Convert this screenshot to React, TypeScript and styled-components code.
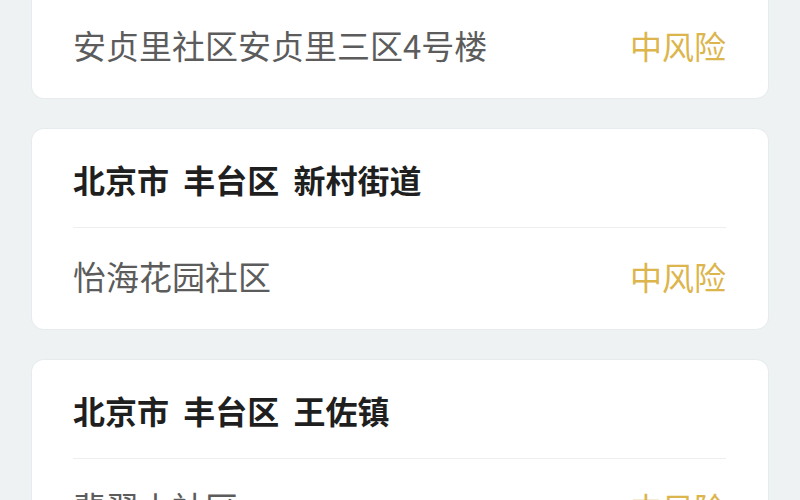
import React from "react";
import styled, { createGlobalStyle } from "styled-components";

const GlobalStyle = createGlobalStyle`
  html, body {
    margin: 0;
    padding: 0;
    background: #eef2f3;
    overflow: hidden;
  }
  body {
    font-family: "Noto Sans CJK SC", "Noto Sans", sans-serif;
  }
`;

const Page = styled.div`
  width: 800px;
  height: 500px;
  overflow: hidden;
  background: #eef2f3;
`;

// 목록이 스크롤된 상태처럼 첫 카드 윗부분이 잘려 보임
const List = styled.div`
  display: flex;
  flex-direction: column;
  gap: 31px;
  padding: 0 32px;
  margin-top: -102px;
`;

const Card = styled.div`
  background: #ffffff;
  border-radius: 12px;
  padding: 0 42px 0 41px;
  box-shadow: 0 0 0 1px rgba(225, 231, 233, 0.6);
`;

const Header = styled.div`
  height: 99px;
  box-sizing: border-box;
  padding-top: 1px;
  display: flex;
  align-items: center;
  border-bottom: 1px solid #eeeeee;
  font-size: 32px;
  font-weight: 700;
  color: #1f1f1f;
  word-spacing: 7px;
`;

const Row = styled.div`
  height: 101px;
  box-sizing: border-box;
  padding-bottom: 5px;
  display: flex;
  align-items: center;
  justify-content: space-between;
  font-size: 33px;
  color: #5c5c5c;
`;

const Risk = styled.span<{ $level: "mid" | "high" }>`
  font-size: 32px;
  color: ${(p) => (p.$level === "high" ? "#e05a4a" : "#dcb54c")};
`;

type Area = {
  region: string;
  place: string;
};

const areas: Area[] = [
  { region: "北京市 朝阳区 安贞街道", place: "安贞里社区安贞里三区4号楼" },
  { region: "北京市 丰台区 新村街道", place: "怡海花园社区" },
  { region: "北京市 丰台区 王佐镇", place: "翡翠山社区" },
];

const App: React.FC = () => {
  return (
    <Page>
      <GlobalStyle />
      <List>
        {areas.map((a) => (
          <Card key={a.place}>
            <Header>{a.region}</Header>
            <Row>
              <span>{a.place}</span>
              <Risk $level="mid">中风险</Risk>
            </Row>
          </Card>
        ))}
      </List>
    </Page>
  );
};

export default App;
